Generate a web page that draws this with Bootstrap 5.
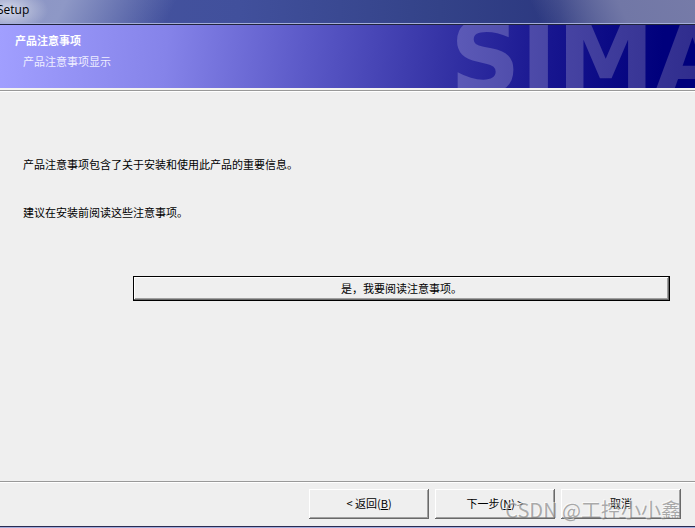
<!DOCTYPE html>
<html lang="zh-CN">
<head>
<meta charset="utf-8">
<meta name="viewport" content="width=device-width, initial-scale=1">
<title>Setup</title>
<link href="https://cdn.jsdelivr.net/npm/bootstrap@5.3.0/dist/css/bootstrap.min.css" rel="stylesheet">
<style>
body { background: #efefef; color: #000; font: 11px/16px "Noto Sans CJK SC", sans-serif; }
.titlebar {
  height: 25px; padding-bottom: 5px; color: #000;
  border-bottom: 1px solid #20243c; box-shadow: inset 0 -1px #a5aedb;
  font: 12px/20px "Open Sans", "Noto Sans", sans-serif;
  background:
    radial-gradient(ellipse 40px 22px at 8px 10px, #d3d7ea 0, #c0c6de99 55%, #c0c6de00 100%),
    linear-gradient(115deg, #8b94c4 0, #8e98c6 60px, #4754a000 160px),
    linear-gradient(245deg, #767ba8 0, #7177a6 70px, #2f3c8000 150px),
    linear-gradient(90deg, #4754a0 0, #41509c 240px, #334288 440px, #2c3880 560px, #5c659b 100%);
}
.titlebar h1 { font: inherit; margin: 0 0 0 -3px; }
.banner {
  height: 63px; padding: 7px 15px; color: #fff;
  background: linear-gradient(94deg, #a19fff 0, #8583e9 24%, #5b59c7 44%, #3634a6 63%, #17158f 79%, #00007c 95%, #00007c 100%);
}
.banner h2 { font: bold 11px/16px "Noto Sans CJK SC", sans-serif; margin: 0 0 5px; }
.banner p { padding-left: 8px; color: #efeeff; }
.brand {
  top: 0; left: 450px; font: bold 98px/66px "DejaVu Sans", sans-serif;
  background: linear-gradient(90deg, #5d5bb8 0, #4744a3 110px, #302d8e 243px);
  background-clip: text; -webkit-background-clip: text; color: transparent; white-space: nowrap;
}
.banner-edge { height: 4px; background: linear-gradient(#f3f3f0 0 2px, #999 2px 3px, #fff 3px); }
.notes { padding: 64px 25px 0 23px; }
.notes p { margin-bottom: 32px; }
.notes .read-row { padding: 24px 0 0 110px; }
.raised {
  border: 0; padding: 0 0 3px; background: #efefef; color: #000; height: 30px; width: 120px;
  box-shadow: inset -1px -1px #696969, inset 1px 1px #fff, inset -2px -2px #a0a0a0;
}
.raised.preset { width: 100%; height: 25px; border: 1px solid #000; padding-bottom: 1px; }
.actions { border-top: 1px solid #999; box-shadow: inset 0 1px #fff; padding: 7px 14px 7px 0; gap: 6px; }
.frame-edge { height: 2px; background: linear-gradient(#292c52 0 1px, #a3acdc 1px); }
.watermark {
  right: 14px; bottom: 6px; font: 20px/24px "Noto Sans CJK SC", sans-serif; color: #77777799;
  text-shadow: -1px -1px #ffffff99; pointer-events: none; white-space: nowrap;
}
</style>
</head>
<body>
<div class="d-flex flex-column min-vh-100 position-relative overflow-hidden">
  <header>
    <div class="titlebar"><h1>Setup</h1></div>
    <div class="banner position-relative overflow-hidden">
      <div class="brand position-absolute" aria-hidden="true">SIMA</div>
      <h2>产品注意事项</h2>
      <p class="mb-0">产品注意事项显示</p>
    </div>
    <div class="banner-edge"></div>
  </header>
  <main class="notes flex-grow-1">
    <p>产品注意事项包含了关于安装和使用此产品的重要信息。</p>
    <p>建议在安装前阅读这些注意事项。</p>
    <div class="read-row"><button type="button" class="raised preset d-block">是，我要阅读注意事项。</button></div>
  </main>
  <footer>
    <div class="actions d-flex justify-content-end">
      <button type="button" class="raised">&lt; 返回(<u>B</u>)</button>
      <button type="button" class="raised">下一步(<u>N</u>) &gt;</button>
      <button type="button" class="raised">取消</button>
    </div>
    <div class="frame-edge"></div>
  </footer>
  <div class="watermark position-absolute">CSDN @工控小小鑫</div>
</div>
<script src="https://cdn.jsdelivr.net/npm/bootstrap@5.3.0/dist/js/bootstrap.bundle.min.js"></script>
</body>
</html>
